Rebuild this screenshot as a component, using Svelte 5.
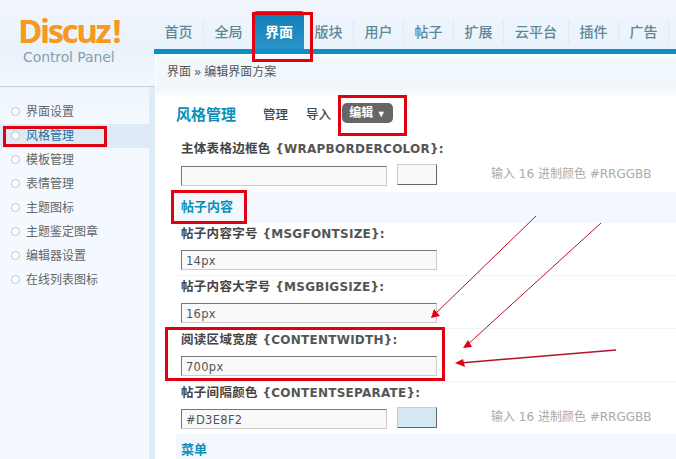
<script>
  const tabs = ['首页', '全局', '界面', '版块', '用户', '帖子', '扩展', '云平台', '插件', '广告'];
  const menu = ['界面设置', '风格管理', '模板管理', '表情管理', '主题图标', '主题鉴定图章', '编辑器设置', '在线列表图标'];
  const hint = '输入 16 进制颜色 #RRGGBB';

  const marks = ['m-tab', 'm-side', 'm-edit', 'm-sec', 'm-row'];
  const arrows = [
    { x1: 536, y1: 216, x2: 433, y2: 316, w: 1, tip: '431,318 440,316 434,309' },
    { x1: 601, y1: 223, x2: 466, y2: 346, w: 1, tip: '463,348 472,347 468,340' },
    { x1: 616, y1: 350, x2: 460, y2: 363, w: 1.5, tip: '455,363 465,367 463,359' }
  ];
</script>

<div class="page">
  <header class="head">
    <div class="logo">
      <div class="brand">Discuz<span>!</span></div>
      <div class="cp">Control Panel</div>
    </div>
    <div class="right">
      <nav class="tabs">
        {#each tabs as t}
          <span class="tab" class:on={t === '界面'}>{t}</span>
        {/each}
      </nav>
      <div class="crumb">界面 » 编辑界面方案</div>
    </div>
  </header>

  <div class="body">
    <aside class="side">
      <ul>
        {#each menu as m}
          <li class:cur={m === '风格管理'}><i></i>{m}</li>
        {/each}
      </ul>
    </aside>

    <main class="main">
      <div class="title">
        <h3>风格管理</h3>
        <span class="link">管理</span>
        <span class="link">导入</span>
        <span class="pill">编辑 <small>▼</small></span>
      </div>

      <div class="row first">
        <div class="lab">主体表格边框色 <span>{'{'}WRAPBORDERCOLOR{'}'}:</span></div>
        <div class="ctl">
          <div class="inp short"></div>
          <div class="swatch"></div>
          <div class="hint">{hint}</div>
        </div>
      </div>

      <div class="sec">帖子内容</div>

      <div class="row">
        <div class="lab">帖子内容字号 <span>{'{'}MSGFONTSIZE{'}'}:</span></div>
        <div class="ctl"><div class="inp">14px</div></div>
      </div>
      <div class="row">
        <div class="lab">帖子内容大字号 <span>{'{'}MSGBIGSIZE{'}'}:</span></div>
        <div class="ctl"><div class="inp">16px</div></div>
      </div>
      <div class="row">
        <div class="lab">阅读区域宽度 <span>{'{'}CONTENTWIDTH{'}'}:</span></div>
        <div class="ctl"><div class="inp">700px</div></div>
      </div>
      <div class="row last">
        <div class="lab">帖子间隔颜色 <span>{'{'}CONTENTSEPARATE{'}'}:</span></div>
        <div class="ctl">
          <div class="inp short">#D3E8F2</div>
          <div class="swatch blue"></div>
          <div class="hint">{hint}</div>
        </div>
      </div>

      <div class="sec end">菜单</div>
    </main>
  </div>

  {#each marks as m}
    <div class="mark {m}"></div>
  {/each}
  <svg class="arrows" width="676" height="459" viewBox="0 0 676 459" aria-hidden="true">
    {#each arrows as a}
      <line x1={a.x1} y1={a.y1} x2={a.x2} y2={a.y2} stroke="#b5122a" stroke-width={a.w} />
      <polygon points={a.tip} fill="#e00010" />
    {/each}
  </svg>
</div>

<style>
  :global(body) { margin: 0; background: #fff; }
  .page {
    position: relative; width: 676px; height: 459px; overflow: hidden;
    font: 12px "Liberation Sans", "Noto Sans CJK SC", sans-serif; color: #555;
    background: #f2f8fd;
  }

  .head { display: flex; height: 87px; background: linear-gradient(#f1f6fc, #e9f2fa 60%, #f2f8fd); border-bottom: 1px solid #c5d3df; box-sizing: border-box; }
  .logo { width: 155px; padding: 16px 0 0 18px; box-sizing: border-box; }
  .brand { font: bold 33px/30px "Open Sans", sans-serif; letter-spacing: -2.4px; color: #f7981f; white-space: nowrap; }
  .brand span { margin-left: 3px; }
  .cp { font: 14px/18px "DejaVu Sans", sans-serif; color: #86a0b0; margin: 2px 0 0 5px; letter-spacing: -0.1px; }

  .right { flex: 1; display: flex; flex-direction: column; min-width: 0; }
  .tabs { display: flex; height: 54px; margin-left: -1px; padding-top: 20px; box-sizing: border-box; border-bottom: 5px solid #0d8fc4; }
  .tab {
    flex: none; height: 24px; line-height: 24px; font-size: 14px; font-weight: 500; color: #5d8899;
    border-right: 1px solid #dfe9f1; width: 50px; box-sizing: border-box; text-align: center; white-space: nowrap;
  }
  .tab:nth-child(8) { width: 65px; }
  .tab.on {
    height: 38px; margin-top: -9px; padding-top: 9px; border-right: 0; color: #fff; font-weight: 700;
    background: linear-gradient(#0f7fb8, #2a93c6); border-radius: 3px 3px 0 0;
  }
  .crumb { flex: 1; padding: 1px 0 0 11px; line-height: 34px; background: linear-gradient(#fbfdfe, #f0f7fd 6px); color: #555; border-left: 1px solid #fff; }

  .body { display: flex; height: 372px; }
  .side { width: 149px; flex: none; border-right: 6px solid #dfebf5; background: linear-gradient(#eef6fc, #f3f9fe 30px); }
  .side ul { list-style: none; margin: 0; padding: 13px 0 0; }
  .side li { height: 24px; line-height: 24px; padding-left: 26px; position: relative; color: #666; }
  .side li.cur { background: #deebf6; color: #2a6a96; }
  .side li i { position: absolute; left: 11px; top: 7px; width: 7px; height: 7px; border: 1px solid #b9c6cf; border-radius: 50%; background: #fff; }

  .main { flex: 1; background: linear-gradient(#eef5fa, #fff 12px); padding: 0 0 0 21px; min-width: 0; }
  .title { display: flex; align-items: center; height: 54px; padding-bottom: 2px; box-sizing: border-box; }
  .title h3 { margin: 0 27px 0 0; width: 60px; font-size: 15px; font-weight: 700; color: #0d8fb8; white-space: nowrap; }
  .link { color: #444; font-size: 12.5px; font-weight: 500; margin-right: 18px; width: 25px; white-space: nowrap; }
  .pill { margin-left: -7px; background: #666; color: #fff; font-weight: 700; border-radius: 5px; width: 51px; height: 20px; line-height: 20px; text-align: center; white-space: nowrap; }
  .pill small { font-size: 9px; }

  .row { height: 53px; padding: 3px 0 0 5px; box-sizing: border-box; border-bottom: 1px solid #f2f5f8; }
  .row.first { height: 51px; border-bottom: 0; padding-top: 0; }
  .row.last { height: 52px; border-bottom: 0; }
  .lab { height: 16px; line-height: 16px; font-size: 12.5px; font-weight: 700; color: #444; letter-spacing: 0.3px; white-space: nowrap; font-family: "DejaVu Sans", "Noto Sans CJK SC", sans-serif; }
  .lab span { font-size: 12px; letter-spacing: 0.25px; color: #555; }
  .ctl { display: flex; align-items: flex-start; margin-top: 8px; }
  .first .ctl { margin-top: 9px; }
  .inp {
    width: 256px; height: 20px; line-height: 20px; box-sizing: border-box; padding-left: 4px; background: #f9f9f9;
    border: 1px solid; border-color: #777 #ccc #ccc #777; color: #555; font-family: "DejaVu Sans", sans-serif; font-size: 11.5px; letter-spacing: .3px;
  }
  .inp.short { width: 206px; }
  .swatch { width: 40px; height: 21px; box-sizing: border-box; margin: -2px 0 0 10px; background: #f9f9f9; border: 1px solid; border-color: #ccc #666 #666 #ccc; }
  .swatch.blue { background: #d3e8f2; }
  .hint { margin-left: 54px; line-height: 16px; color: #aaa; font-family: "DejaVu Sans", "Noto Sans CJK SC", sans-serif; font-size: 12px; white-space: nowrap; }
  .sec { height: 31px; line-height: 30px; padding-left: 5px; background: #f2f7fd; color: #0d8fb8; font-size: 13px; font-weight: 700; }
  .sec.end { height: 25px; line-height: 32px; }

  .mark { position: absolute; border: 3px solid #e00010; box-sizing: border-box; }
  .m-tab { left: 252px; top: 12px; width: 61px; height: 50px; }
  .m-side { left: 3px; top: 126px; width: 104px; height: 21px; }
  .m-edit { left: 338px; top: 95px; width: 69px; height: 41px; }
  .m-sec { left: 171px; top: 190px; width: 76px; height: 34px; }
  .m-row { left: 165px; top: 327px; width: 280px; height: 54px; }
  .arrows { position: absolute; inset: 0; pointer-events: none; }
</style>
